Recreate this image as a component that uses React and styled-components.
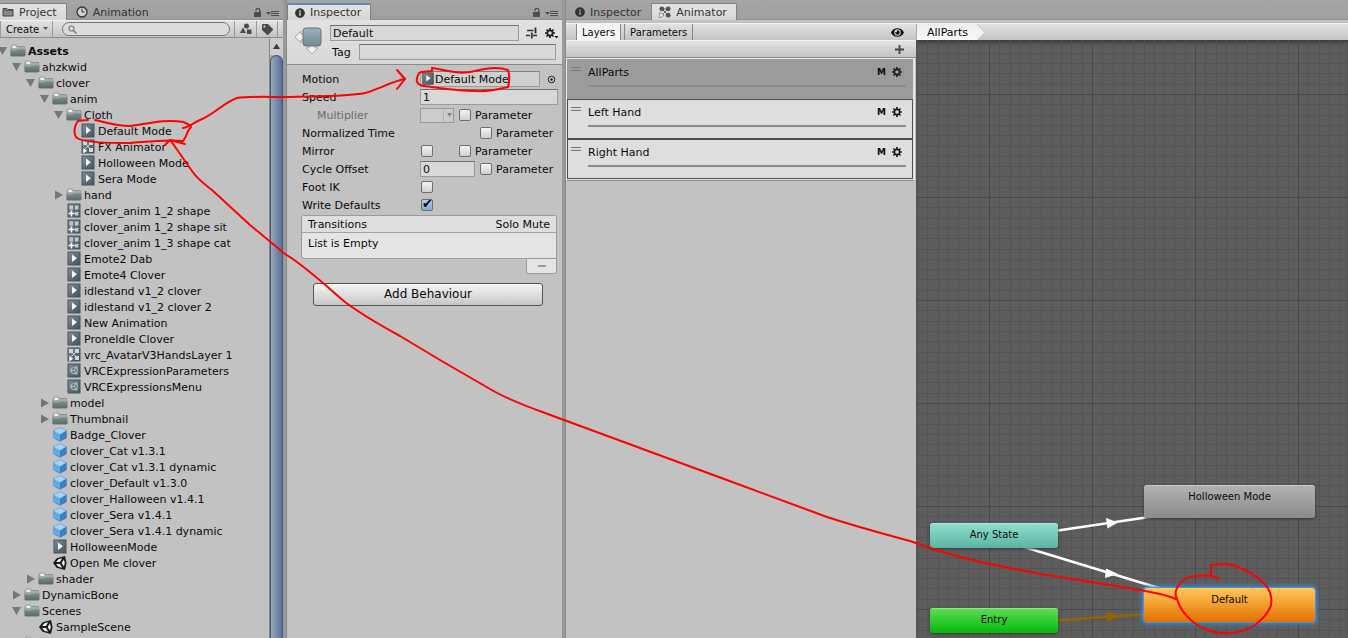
import { useState } from "react";
import styled, { createGlobalStyle, css } from "styled-components";
import { FaEye, FaInfoCircle, FaTag } from "react-icons/fa";

// depth, icon, name, arrow (open / closed)
const treeItems = [
  { depth: 0, icon: "folder", name: "Assets", arrow: "open", bold: true },
  { depth: 1, icon: "folder", name: "ahzkwid", arrow: "open" },
  { depth: 2, icon: "folder", name: "clover", arrow: "open" },
  { depth: 3, icon: "folder", name: "anim", arrow: "open" },
  { depth: 4, icon: "folder", name: "Cloth", arrow: "open" },
  { depth: 5, icon: "clip", name: "Default Mode" },
  { depth: 5, icon: "controller", name: "FX Animator" },
  { depth: 5, icon: "clip", name: "Holloween Mode" },
  { depth: 5, icon: "clip", name: "Sera Mode" },
  { depth: 4, icon: "folder", name: "hand", arrow: "closed" },
  { depth: 4, icon: "override", name: "clover_anim 1_2 shape" },
  { depth: 4, icon: "override", name: "clover_anim 1_2 shape sit" },
  { depth: 4, icon: "override", name: "clover_anim 1_3 shape cat" },
  { depth: 4, icon: "clip", name: "Emote2 Dab" },
  { depth: 4, icon: "clip", name: "Emote4 Clover" },
  { depth: 4, icon: "clip", name: "idlestand v1_2 clover" },
  { depth: 4, icon: "clip", name: "idlestand v1_2 clover 2" },
  { depth: 4, icon: "clip", name: "New Animation" },
  { depth: 4, icon: "clip", name: "ProneIdle Clover" },
  { depth: 4, icon: "controller", name: "vrc_AvatarV3HandsLayer 1" },
  { depth: 4, icon: "asset", name: "VRCExpressionParameters" },
  { depth: 4, icon: "asset", name: "VRCExpressionsMenu" },
  { depth: 3, icon: "folder", name: "model", arrow: "closed" },
  { depth: 3, icon: "folder", name: "Thumbnail", arrow: "closed" },
  { depth: 3, icon: "prefab", name: "Badge_Clover" },
  { depth: 3, icon: "prefab", name: "clover_Cat v1.3.1" },
  { depth: 3, icon: "prefab", name: "clover_Cat v1.3.1 dynamic" },
  { depth: 3, icon: "prefab", name: "clover_Default v1.3.0" },
  { depth: 3, icon: "prefab", name: "clover_Halloween v1.4.1" },
  { depth: 3, icon: "prefab", name: "clover_Sera v1.4.1" },
  { depth: 3, icon: "prefab", name: "clover_Sera v1.4.1 dynamic" },
  { depth: 3, icon: "clip", name: "HolloweenMode" },
  { depth: 3, icon: "scene", name: "Open Me clover" },
  { depth: 2, icon: "folder", name: "shader", arrow: "closed" },
  { depth: 1, icon: "folder", name: "DynamicBone", arrow: "closed" },
  { depth: 1, icon: "folder", name: "Scenes", arrow: "open" },
  { depth: 2, icon: "scene", name: "SampleScene" },
  { depth: 1, icon: "folder", name: "" }
];

const layers = ["AllParts", "Left Hand", "Right Hand"];

/* ---------- icons ---------- */

const FileBase = () => (
  <rect x="2" y="1" width="12" height="13" fill="url(#fileFill)" stroke="#47545b" />
);

const UnityMark = ({ dark, light }) => (
  <>
    <path d="M1 8 4.600 3.200 13 1l1.600 7L13 15l-8.400-2.200z" fill={dark} />
    <path d="M4.200 7 6.400 4.200l3.800-.9-2.300 3.700zM4.200 9h3.700l2.300 3.700-3.800-.9zM9.700 8l2.200-3.600L12.800 8l-.9 3.600z" fill={light} />
  </>
);

const AssetIcon = ({ type }) => (
  <svg width="16" height="16" viewBox="0 0 16 16" aria-hidden="true">
    {type === "folder" && (
      <>
        <path d="M1 13V4l1.500-2H6l1.200 1.500H14.500V13z" fill="#a3adad" stroke="#7d8888" strokeWidth=".7" />
        <path d="M2 4.800V3.600L3 2.600h2.600l1.200 1.600-1 .8z" fill="#eef1f1" />
        <path d="M.5 6.300h6L8 5.200h7.500V12.500l-.8.8H1.300l-.8-.8z" fill="url(#folderFill)" />
        <path d="M1 6.900h5.800L8.300 5.800H15" fill="none" stroke="#c3cbcb" strokeWidth=".6" />
      </>
    )}
    {type === "clip" && (
      <>
        <FileBase />
        <path d="M6 3.500 11 7.200 6 10.900z" fill="#f4f7f8" />
      </>
    )}
    {type === "controller" && (
      <>
        <FileBase />
        <path d="M3 2h4v4H3zM9 2h4v4H9zM9 9h4v4H9z" fill="#cdd8de" />
        <path d="M6 5l4 5M10 5l-5 5" stroke="#cdd8de" fill="none" />
        <path d="M3 8.500 7.500 11.700 3 15z" fill="#fff" stroke="#4c585f" strokeWidth=".5" />
      </>
    )}
    {type === "override" && (
      <>
        <FileBase />
        <path d="M3.500 2.500H7v4H3.500zM9 2.500h3.500v4H9zM9 9h3.500v3.500H9z" fill="#bccbd3" />
        <path d="M5.500 7.500v6M2.500 10.500h6" stroke="#fff" strokeWidth="1.500" />
      </>
    )}
    {type === "asset" && (
      <>
        <FileBase />
        <g transform="translate(3 2.500) scale(.62)">
          <UnityMark dark="#aebbc2" light="#5b6a72" />
        </g>
      </>
    )}
    {type === "prefab" && (
      <>
        <path d="M8 .5l6.500 3-6.500 4-6.500-4z" fill="#a5d3f8" />
        <path d="M1.500 3.500l6.500 4v7l-6.500-3.500z" fill="#5fa8ea" />
        <path d="M14.500 3.500l-6.500 4v7l6.500-3.500z" fill="#3d7dc4" />
        <path d="M8 .5l6.500 3V11L8 14.500 1.500 11V3.500z" fill="none" stroke="#4b83ba" strokeWidth=".5" />
      </>
    )}
    {type === "scene" && <UnityMark dark="#1c1c1c" light="#f2f2f2" />}
  </svg>
);

const FoldArrow = ({ state }) => (
  <ArrowSvg width="10" height="16" aria-hidden="true">
    {state === "open" && <path d="M-2 4H7L2.500 12z" fill="#777" />}
    {state === "closed" && <path d="M-1 3.500 7 8-1 12.500z" fill="#777" />}
  </ArrowSvg>
);

const GearIcon = ({ menu }) => (
  <svg width={menu ? 14 : 10} height="12" viewBox={menu ? "0 0 14 12" : "0 0 10 12"} aria-hidden="true">
    <g transform="translate(5 6)" stroke="#1c1c1c" fill="none">
      <circle r="2.600" strokeWidth="1.600" />
      <path d="M0-5v2M0 3v2M-5 0h2M3 0h2M-3.500-3.500l1.300 1.300M2.200 2.200l1.300 1.300M-3.500 3.500l1.300-1.300M2.200-2.200l1.300-1.300" strokeWidth="1.700" />
    </g>
    {menu && <path d="M9.500 9h4l-2 2.500z" fill="#1c1c1c" />}
  </svg>
);

const TabFolderIcon = () => (
  <svg width="12" height="12" viewBox="0 0 12 12" aria-hidden="true">
    <path d="M1 3.500V2.500h4l1 1h5V10H1z" fill="#888" stroke="#454545" />
    <path d="M1 4.500h10" stroke="#5a5a5a" />
  </svg>
);

const ClockIcon = () => (
  <svg width="12" height="12" viewBox="0 0 12 12" aria-hidden="true">
    <circle cx="6" cy="6" r="5" fill="#d0d0d0" stroke="#333" strokeWidth="1.300" />
    <path d="M6 2.500V6h2.500" fill="none" stroke="#333" />
  </svg>
);

const NodesIcon = () => (
  <svg width="12" height="12" viewBox="0 0 12 12" aria-hidden="true">
    <path d="M3 3l6 6M9 3 3 9M3 3h6" stroke="#666" />
    <circle cx="2.800" cy="2.800" r="2.400" fill="#555" />
    <circle cx="9.200" cy="2.800" r="2.400" fill="#555" />
    <circle cx="9.200" cy="9.200" r="2.400" fill="#555" />
    <path d="M.7 6.500 5 9.200.7 12z" fill="#fff" stroke="#555" strokeWidth=".6" />
  </svg>
);

const LockMenu = () => (
  <MenuButton aria-label="Panel menu">
    <svg width="26" height="11" viewBox="0 0 26 11">
      <path d="M0 5h7v5H0z" fill="#4d4d4d" />
      <path d="M2 4V3.200a1.900 1.900 0 0 1 3.800 0V5" fill="none" stroke="#4d4d4d" strokeWidth="1.300" />
      <path d="M12 5h5l-2.500 3z" fill="#4d4d4d" />
      <path d="M17 4.500h8M17 6.500h8M17 8.500h8" stroke="#4d4d4d" />
    </svg>
  </MenuButton>
);

/* ---------- panels ---------- */

const ProjectPanel = () => {
  const [search, setSearch] = useState("");

  return (
    <Project>
      <TabBar>
        <Tab $active $flush>
          <TabFolderIcon />
          Project
        </Tab>
        <Tab>
          <ClockIcon />
          Animation
        </Tab>
        <LockMenu />
      </TabBar>
      <ProjectToolbar>
        <CreateButton>
          Create
          <svg width="5" height="8" aria-hidden="true">
            <path d="M0 2h5L2.500 5z" fill="#555" />
          </svg>
        </CreateButton>
        <SearchBox>
          <svg width="9" height="9" viewBox="0 0 9 9" aria-hidden="true">
            <circle cx="3.500" cy="3.500" r="2.500" fill="none" stroke="#777" strokeWidth="1.200" />
            <path d="M5.500 5.500 8.500 8.500" stroke="#777" strokeWidth="1.500" />
          </svg>
          <input aria-label="Search" value={search} onChange={(e) => setSearch(e.target.value)} />
        </SearchBox>
        <FilterButton aria-label="Search by type">
          <svg width="12" height="12" viewBox="0 0 12 12">
            <circle cx="6.500" cy="3" r="2.500" fill="#4a4a4a" />
            <path d="M0 10 3 4.500 6 10z" fill="#4a4a4a" />
            <path d="M7 6.500h4.500V11H7z" fill="#4a4a4a" />
          </svg>
        </FilterButton>
        <FilterButton aria-label="Search by label">
          <FaTag size={11} color="#4a4a4a" />
        </FilterButton>
      </ProjectToolbar>
      <TreeArea>
        <Tree>
          {treeItems.map((item, index) => (
            <TreeRow key={index} $depth={item.depth} $bold={item.bold}>
              <FoldArrow state={item.arrow} />
              <AssetIcon type={item.icon} />
              <span>{item.name}</span>
            </TreeRow>
          ))}
        </Tree>
        <ScrollBar>
          <svg width="13" height="17" aria-hidden="true">
            <path d="M3 11h7L6.500 5.500z" fill="#3c3c3c" />
          </svg>
          <ScrollThumb />
        </ScrollBar>
      </TreeArea>
    </Project>
  );
};

const ParameterToggle = ({ id }) => (
  <>
    <CheckBox type="checkbox" id={id} />
    <label htmlFor={id}>Parameter</label>
  </>
);

const InspectorPanel = () => (
  <Inspector>
    <TabBar>
      <Tab $active $focused>
        <FaInfoCircle size={10} />
        Inspector
      </Tab>
      <LockMenu />
    </TabBar>
    <StateHeader>
      <svg width="30" height="32" viewBox="0 0 30 32" aria-hidden="true">
        <path d="M1 12 7 6v3h3v6H7v3zM12 23h3v-5h6v5h3l-6 6z" fill="#eee" stroke="#aaa" />
        <rect x="9" y="3" width="18" height="18" rx="3" fill="url(#stateFill)" stroke="#63747e" />
      </svg>
      <HeaderFields>
        <HeaderRow>
          <TextField aria-label="State name" defaultValue="Default" />
          <svg width="12" height="12" viewBox="0 0 12 12" aria-hidden="true">
            <path d="M1 3.500h6.500M0 8.500h4M7 8.500h4" stroke="#333" strokeWidth="1.500" />
            <path d="M9.500.5v6M5.800 5.500v6" stroke="#333" strokeWidth="1.800" />
          </svg>
          <GearIcon menu />
        </HeaderRow>
        <HeaderRow>
          <label htmlFor="tag">Tag</label>
          <TextField id="tag" defaultValue="" />
        </HeaderRow>
      </HeaderFields>
    </StateHeader>
    <Form>
      <FormRow>
        <span>Motion</span>
        <ObjectField>
          <AssetIcon type="clip" />
          Default Mode
        </ObjectField>
        <PickButton aria-label="Select motion">
          <svg width="9" height="9" viewBox="0 0 9 9">
            <circle cx="4.500" cy="4.500" r="3.300" fill="none" stroke="#222" />
            <circle cx="4.500" cy="4.500" r="1.200" fill="#222" />
          </svg>
        </PickButton>
      </FormRow>
      <FormRow>
        <label htmlFor="speed">Speed</label>
        <TextField id="speed" defaultValue="1" />
      </FormRow>
      <FormRow $indent>
        <label htmlFor="multiplier">Multiplier</label>
        <Slot $w={38}>
          <DropDown>
            <select id="multiplier" disabled>
              <option></option>
            </select>
            <svg width="5" height="4" aria-hidden="true">
              <path d="M0 0h5L2.500 4z" fill="#888" />
            </svg>
          </DropDown>
        </Slot>
        <ParameterToggle id="multiplierParam" />
      </FormRow>
      <FormRow>
        <span>Normalized Time</span>
        <Slot $w={59} />
        <ParameterToggle id="timeParam" />
      </FormRow>
      <FormRow>
        <label htmlFor="mirror">Mirror</label>
        <Slot $w={38}>
          <CheckBox type="checkbox" id="mirror" />
        </Slot>
        <ParameterToggle id="mirrorParam" />
      </FormRow>
      <FormRow>
        <label htmlFor="cycle">Cycle Offset</label>
        <Slot $w={59}>
          <TextField id="cycle" defaultValue="0" />
        </Slot>
        <ParameterToggle id="cycleParam" />
      </FormRow>
      <FormRow>
        <label htmlFor="footik">Foot IK</label>
        <CheckBox type="checkbox" id="footik" />
      </FormRow>
      <FormRow>
        <label htmlFor="writeDefaults">Write Defaults</label>
        <CheckBox type="checkbox" id="writeDefaults" defaultChecked />
      </FormRow>
    </Form>
    <Transitions>
      <TransitionHead>
        <span>Transitions</span>
        <span>Solo Mute</span>
      </TransitionHead>
      <TransitionBody>List is Empty</TransitionBody>
    </Transitions>
    <RemoveButton aria-label="Remove transition">
      <svg width="8" height="2" aria-hidden="true">
        <path d="M0 0h8v2H0z" fill="#999" />
      </svg>
    </RemoveButton>
    <AddBehaviour>Add Behaviour</AddBehaviour>
  </Inspector>
);

const gridSteps = [10, 21, 31, 41, 52, 62, 72, 82, 93];

const AnimatorPanel = () => {
  const [selected, setSelected] = useState(0);

  return (
    <Animator>
      <TabBar>
        <Tab>
          <FaInfoCircle size={10} />
          Inspector
        </Tab>
        <Tab $active>
          <NodesIcon />
          Animator
        </Tab>
      </TabBar>
      <AnimatorBody>
        <LayerSide>
          <SideTabs>
            <SideTab $active>Layers</SideTab>
            <SideTab>Parameters</SideTab>
            <SideIcon aria-label="Hide layers">
              <FaEye size={13} color="#111" />
            </SideIcon>
          </SideTabs>
          <SideTools>
            <SideIcon aria-label="Add layer">
              <svg width="9" height="9" aria-hidden="true">
                <path d="M0 4.500h9M4.500 0v9" stroke="#444" strokeWidth="1.800" />
              </svg>
            </SideIcon>
          </SideTools>
          <LayerList>
            {layers.map((name, index) => (
              <LayerItem key={name} $selected={index === selected} onClick={() => setSelected(index)}>
                <Grip />
                <LayerMain>
                  <LayerTop>
                    <span>{name}</span>
                    <Mask>M</Mask>
                    <GearIcon />
                  </LayerTop>
                  <WeightLine />
                </LayerMain>
              </LayerItem>
            ))}
          </LayerList>
        </LayerSide>
        <GraphSide>
          <Crumbs>
            <Crumb href="#allparts">AllParts</Crumb>
            <svg width="8" height="17" aria-hidden="true">
              <path d="M0 0 8 8.500 0 17z" fill="#f2f2f2" />
              <path d="M0 0 8 8.500 0 17" fill="none" stroke="#bbb" />
            </svg>
          </Crumbs>
          <Graph>
            <GraphLines aria-hidden="true">
              <defs>
                <pattern id="grid" x="73" y="54" width="103" height="103" patternUnits="userSpaceOnUse">
                  {gridSteps.map((p) => (
                    <path key={p} d={`M${p + 0.5} 0v103M0 ${p + 0.5}h103`} stroke="#535353" />
                  ))}
                  <path d="M.5 0v103M0 .5h103" stroke="#484848" />
                </pattern>
              </defs>
              <rect width="100%" height="100%" fill="url(#grid)" />
              <path d="M142 490.500 240 476M108 507l138 42" stroke="#fff" strokeWidth="2.500" />
              <path d="M190 478l12 4.500-10.500 6zM190 528.500l12 5.500-13 4z" fill="#fff" />
              <path d="M142 580.500 230 574" stroke="#946400" strokeWidth="2.500" />
              <path d="M191 571.500l12 4.500-11.500 6z" fill="#946400" />
            </GraphLines>
            <Node $x={14} $y={483} $w={128} $h={25} $from="#8de0cd" $to="#5fb3a4">Any State</Node>
            <Node $x={228} $y={445} $w={171} $h={33} $from="#b2b2b2" $to="#8b8b8b">Holloween Mode</Node>
            <Node $x={14} $y={568} $w={128} $h={25} $from="#5fdd59" $to="#04b90a">Entry</Node>
            <Node $x={228} $y={548} $w={171} $h={34} $from="#ffc85a" $to="#e47100" $selected>Default</Node>
          </Graph>
        </GraphSide>
      </AnimatorBody>
    </Animator>
  );
};

// red hand-drawn notes linking the clip, the motion slot and the state
const Notes = () => (
  <NotesSvg width="1348" height="638" aria-hidden="true">
    <path d="M88 120 78 121C74 126 73 134 77 138C85 143 110 143 130 143C145 142 165 139 183 141C187 137 186 132 191 127C190 124 186 124 184 122C160 119 150 124 130 126C115 126 105 122 95 120" />
    <path d="M183 128C190 127 193 123 200 120C215 114 223 103 237 98C250 96 270 97 285 97C320 96 345 97 365 93C382 88 390 82 405 79" />
    <path d="M397 70l8 9-8 10" />
    <path d="M419 73C415 80 416 85 424 86C440 88 455 91 475 91C490 92 500 89 508 87C510 80 509 73 508 70C500 67 490 67 475 71C460 75 450 71 432 68L432 71C428 72 422 71 419 73" />
    <path d="M1176 599C1165 594 1155 593 1145 591C1100 583 1050 576 1010 568C975 562 940 552 910 541C880 533 855 526 827 517L735 483L640 448L545 413C520 404 505 398 490 389L440 360L400 336C380 325 362 315 345 302C325 285 305 266 285 254L250 225L212 190C204 184 196 177 192 171L171 141" />
    <path d="M165 145l5-5 15 4" />
    <path d="M1219 579C1213 574 1195 575 1187 578C1178 583 1173 592 1177 599C1180 610 1190 622 1203 628C1220 636 1240 635 1255 625C1268 615 1273 605 1271 597C1270 585 1255 574 1240 568C1228 562 1220 564 1211 565V576" />
  </NotesSvg>
);

const App = () => {
  return (
    <Editor>
      <GlobalStyle />
      <Defs width="0" height="0" aria-hidden="true">
        <linearGradient id="fileFill" x2="1" y2="1">
          <stop stopColor="#7d8e97" />
          <stop offset="1" stopColor="#45535a" />
        </linearGradient>
        <linearGradient id="folderFill" x2="0" y2="1">
          <stop stopColor="#84908f" />
          <stop offset="1" stopColor="#5c6a6a" />
        </linearGradient>
        <linearGradient id="stateFill" x2="0" y2="1">
          <stop stopColor="#9fb2bd" />
          <stop offset="1" stopColor="#748994" />
        </linearGradient>
      </Defs>
      <ProjectPanel />
      <InspectorPanel />
      <AnimatorPanel />
      <Notes />
    </Editor>
  );
};

const GlobalStyle = createGlobalStyle`
  * {
    box-sizing: border-box;
  }
  body {
    margin: 0;
    overflow: hidden;
  }
  body, button, input, select {
    font-family: "DejaVu Sans", Verdana, sans-serif;
    font-size: 11px;
    color: #0a0a0a;
  }
  button {
    padding: 0;
    border: none;
    background: none;
  }
  svg {
    flex-shrink: 0;
  }
`;

const barFill = css`
  background: linear-gradient(#e2e2e2, #c4c4c4);
  border-top: 1px solid #f2f2f2;
`;

const Editor = styled.div`
  position: relative;
  display: grid;
  grid-template-columns: 286px 279px 1fr;
  height: 100vh;
  overflow: hidden;
  background: #c2c2c2;
`;

const Defs = styled.svg`
  position: absolute;
`;

const Panel = styled.section`
  display: flex;
  flex-direction: column;
  min-width: 0;
  min-height: 0;
`;

const Project = styled(Panel)`
  border-right: 3px solid #9a9a9a;
`;

const Inspector = styled(Panel)`
  border-left: 1px solid #8a8a8a;
  border-right: 3px solid #9a9a9a;
`;

const Animator = styled(Panel)`
  border-left: 1px solid #8a8a8a;
`;

const TabBar = styled.div`
  display: flex;
  align-items: flex-end;
  flex-shrink: 0;
  height: 20px;
  background: linear-gradient(#a5a5a5, #9f9f9f);
  border-bottom: 1px solid #8f8f8f;
`;

const Tab = styled.button`
  display: flex;
  align-items: center;
  gap: 5px;
  height: 16px;
  padding: 0 10px 0 9px;
  margin-bottom: -1px;
  color: #333;
  white-space: nowrap;
  ${(props) =>
    props.$active &&
    css`
      height: 17px;
      padding: 0 9px 0 7px;
      background: linear-gradient(#e4e4e4, #d6d6d6);
      border: 1px solid #818181;
      border-bottom: none;
      border-radius: 2px 2px 0 0;
    `}
  ${(props) => props.$focused && "border-top: 2px solid #5b87c5;"}
  ${(props) => props.$flush && "padding-left: 2px; border-left: none;"}
`;

const MenuButton = styled.button`
  display: flex;
  margin-left: auto;
  padding-right: 3px;
  padding-bottom: 1px;
`;

const ProjectToolbar = styled.div`
  display: flex;
  align-items: center;
  flex-shrink: 0;
  height: 18px;
  padding-right: 5px;
  border-bottom: 1px solid #8c8c8c;
  ${barFill}
`;

const CreateButton = styled.button`
  display: flex;
  align-items: center;
  gap: 4px;
  width: 53px;
  height: 100%;
  padding-left: 5px;
  border-left: 1px solid #999;
  border-right: 1px solid #999;
  font-size: 10px;
`;

const SearchBox = styled.label`
  display: flex;
  align-items: center;
  flex: 1;
  gap: 4px;
  height: 14px;
  min-width: 0;
  margin: 0 4px 0 9px;
  padding: 0 5px;
  border: 1px solid #777;
  border-radius: 7px;
  background: #dcdcdc;
  input {
    flex: 1;
    min-width: 0;
    height: 10px;
    padding: 0;
    border: none;
    outline: none;
    background: none;
    font-size: 10px;
  }
`;

const FilterButton = styled.button`
  display: flex;
  align-items: center;
  justify-content: center;
  width: 22px;
  height: 100%;
  border-left: 1px solid #999;
  &:last-child {
    border-right: 1px solid #999;
  }
`;

const TreeArea = styled.div`
  display: flex;
  flex: 1;
  min-height: 0;
`;

const Tree = styled.ul`
  flex: 1;
  min-width: 0;
  margin: 0;
  padding: 5px 0 0;
  overflow: hidden;
  list-style: none;
`;

const TreeRow = styled.li`
  display: flex;
  align-items: center;
  height: 16px;
  line-height: 16px;
  padding-left: ${(props) => props.$depth * 14}px;
  font-weight: ${(props) => (props.$bold ? "bold" : "normal")};
  white-space: nowrap;
  span {
    padding: 2px 0 0 2px;
  }
`;

const ArrowSvg = styled.svg`
  overflow: visible;
`;

const ScrollBar = styled.div`
  display: flex;
  flex-direction: column;
  width: 14px;
  border-left: 1px solid #888;
  background: linear-gradient(90deg, #a8a8a8, #c9c9c9);
  svg {
    background: #cdcdcd;
  }
`;

const ScrollThumb = styled.div`
  flex: 1;
  border: 1px solid #46566f;
  border-bottom: none;
  border-radius: 7px 7px 0 0;
  background: linear-gradient(90deg, #95a6bd, #5a7099);
`;

const StateHeader = styled.div`
  display: flex;
  gap: 6px;
  height: 45px;
  padding: 5px 6px 0 7px;
  background: linear-gradient(#e2e2e2, #d8d8d8);
  border-bottom: 1px solid #8a8a8a;
`;

const HeaderFields = styled.div`
  display: flex;
  flex: 1;
  flex-direction: column;
  gap: 3px;
  min-width: 0;
`;

const HeaderRow = styled.div`
  display: flex;
  align-items: center;
  gap: 7px;
  > svg + svg {
    margin-right: -3px;
  }
  label {
    padding: 0 1px 0 2px;
  }
`;

const TextField = styled.input`
  flex: 1;
  width: 100%;
  min-width: 0;
  height: 16px;
  padding: 0 2px;
  border: 1px solid #9b9b9b;
  border-top-color: #6f6f6f;
  background: #d8d8d8;
  outline: none;
`;

const Form = styled.div`
  display: flex;
  flex-direction: column;
  padding: 5px 4px 0 15px;
`;

const FormRow = styled.div`
  display: flex;
  align-items: center;
  height: 18px;
  white-space: nowrap;
  > :first-child {
    width: 118px;
    padding-left: ${(props) => (props.$indent ? 15 : 0)}px;
    color: ${(props) => (props.$indent ? "#6c6c6c" : "inherit")};
  }
`;

const Slot = styled.div`
  display: flex;
  align-items: center;
  width: ${(props) => props.$w}px;
  padding-right: 4px;
`;

const ObjectField = styled.button`
  display: flex;
  align-items: center;
  flex: 1;
  height: 16px;
  border: 1px solid #9b9b9b;
  border-top-color: #7f7f7f;
  background: #cfcfcf;
  svg {
    width: 14px;
    height: 14px;
  }
`;

const PickButton = styled.button`
  display: flex;
  align-items: center;
  justify-content: center;
  width: 18px;
  padding-left: 4px;
`;

const DropDown = styled.div`
  display: flex;
  align-items: center;
  justify-content: space-around;
  width: 34px;
  height: 15px;
  border: 1px solid #999;
  background: #cbcbcb;
  select {
    appearance: none;
    width: 21px;
    height: 13px;
    border: none;
    border-right: 1px solid #aaa;
    background: none;
  }
`;

const CheckBox = styled.input`
  appearance: none;
  position: relative;
  flex-shrink: 0;
  width: 12px;
  height: 12px;
  margin: 0 4px 0 1px;
  border: 1px solid #6e6e6e;
  border-radius: 2px;
  background: linear-gradient(#f4f4f4, #cfcfcf);
  &:checked {
    background: linear-gradient(#b9d0ec, #86a6cf);
  }
  &:checked::after {
    content: "✔";
    position: absolute;
    top: -3px;
    left: 0;
    font-size: 13px;
    line-height: 14px;
    color: #0a0a0a;
  }
`;

const Transitions = styled.div`
  margin: 1px 5px 0 14px;
  border: 1px solid #9a9a9a;
  border-radius: 3px 3px 0 3px;
  background: #e4e4e4;
`;

const TransitionHead = styled.div`
  display: flex;
  align-items: center;
  justify-content: space-between;
  height: 17px;
  padding: 0 6px;
  border-bottom: 1px solid #a2a2a2;
  background: #dedede;
`;

const TransitionBody = styled.div`
  height: 25px;
  padding: 0 6px;
  line-height: 21px;
`;

const RemoveButton = styled.button`
  display: flex;
  align-items: center;
  justify-content: center;
  align-self: flex-end;
  width: 31px;
  height: 15px;
  margin-right: 5px;
  border: 1px solid #9a9a9a;
  border-top: none;
  border-radius: 0 0 3px 3px;
  background: #e4e4e4;
`;

const AddBehaviour = styled.button`
  align-self: center;
  width: 230px;
  height: 23px;
  margin: 9px 0 0 7px;
  padding-bottom: 2px;
  border: 1px solid #555;
  border-radius: 3px;
  background: linear-gradient(#f6f6f6, #c6c6c6);
  font-size: 12px;
`;

const AnimatorBody = styled.div`
  display: flex;
  flex: 1;
  min-height: 0;
  padding-top: 3px;
`;

const LayerSide = styled.div`
  display: flex;
  flex-direction: column;
  width: 350px;
`;

const SideTabs = styled.div`
  display: flex;
  height: 17px;
  padding: 0 12px 0 10px;
  gap: 3px;
  ${barFill}
`;

const SideTab = styled.button`
  padding: 0 5px;
  border-right: 1px solid #888;
  border-left: 1px solid #888;
  font-size: 10px;
  background: ${(props) => (props.$active ? "#f4f4f4" : "none")};
`;

const SideTools = styled.div`
  display: flex;
  height: 18px;
  padding: 0 12px;
  border-bottom: 1px solid #8c8c8c;
  ${barFill}
`;

const SideIcon = styled.button`
  display: flex;
  align-items: center;
  margin-left: auto;
`;

const LayerList = styled.ul`
  margin: 0 1px 0 0;
  padding: 0 1px 1px 0;
  border: 1px solid #e8e8e8;
  border-bottom: 1px solid #8c8c8c;
  background: #e4e4e4;
  list-style: none;
`;

const LayerItem = styled.li`
  display: flex;
  gap: 7px;
  height: 40px;
  padding: 5px 6px 0 3px;
  border: 1px solid ${(props) => (props.$selected ? "#9b9b9b" : "#4e4e4e")};
  background: ${(props) => (props.$selected ? "#9b9b9b" : "#dedede")};
`;

const Grip = styled.div`
  width: 10px;
  height: 4px;
  margin-top: 2px;
  border: 1px solid #777;
  border-width: 1px 0;
`;

const LayerMain = styled.div`
  flex: 1;
`;

const LayerTop = styled.div`
  display: flex;
  align-items: center;
  gap: 6px;
  height: 14px;
  padding-right: 4px;
  span:first-child {
    flex: 1;
  }
`;

const Mask = styled.span`
  font-size: 9px;
  font-weight: bold;
`;

const WeightLine = styled.div`
  height: 2px;
  margin-top: 6px;
  background: #8b8b8b;
`;

const GraphSide = styled.div`
  display: flex;
  flex: 1;
  flex-direction: column;
  min-width: 0;
`;

const Crumbs = styled.nav`
  display: flex;
  height: 17px;
  ${barFill}
`;

const Crumb = styled.a`
  padding: 0 9px 0 10px;
  background: linear-gradient(#ececec, #fafafa);
  border-left: 1px solid #aaa;
  line-height: 18px;
  color: #0a0a0a;
  text-decoration: none;
`;

const Graph = styled.div`
  position: relative;
  flex: 1;
  overflow: hidden;
  background: #5d5d5d;
  box-shadow: inset 0 4px 5px -2px #333;
`;

const GraphLines = styled.svg`
  position: absolute;
  width: 100%;
  height: 100%;
`;

const Node = styled.button`
  position: absolute;
  left: ${(props) => props.$x}px;
  top: ${(props) => props.$y}px;
  width: ${(props) => props.$w}px;
  height: ${(props) => props.$h}px;
  display: flex;
  justify-content: center;
  padding-top: 6px;
  border-radius: 3px;
  background: linear-gradient(${(props) => props.$from}, ${(props) => props.$to});
  box-shadow: ${(props) =>
    props.$selected ? "0 0 0 1px #4a93d8, 0 0 4px 2px #3c8ad8" : "0 1px 3px #333, inset 0 1px 0 rgba(255, 255, 255, 0.3)"};
  font-size: 10px;
`;

const NotesSvg = styled.svg`
  position: absolute;
  top: 0;
  left: 0;
  pointer-events: none;
  fill: none;
  stroke: #f00;
  stroke-width: 2;
  stroke-linejoin: round;
  stroke-linecap: round;
`;

export default App;
